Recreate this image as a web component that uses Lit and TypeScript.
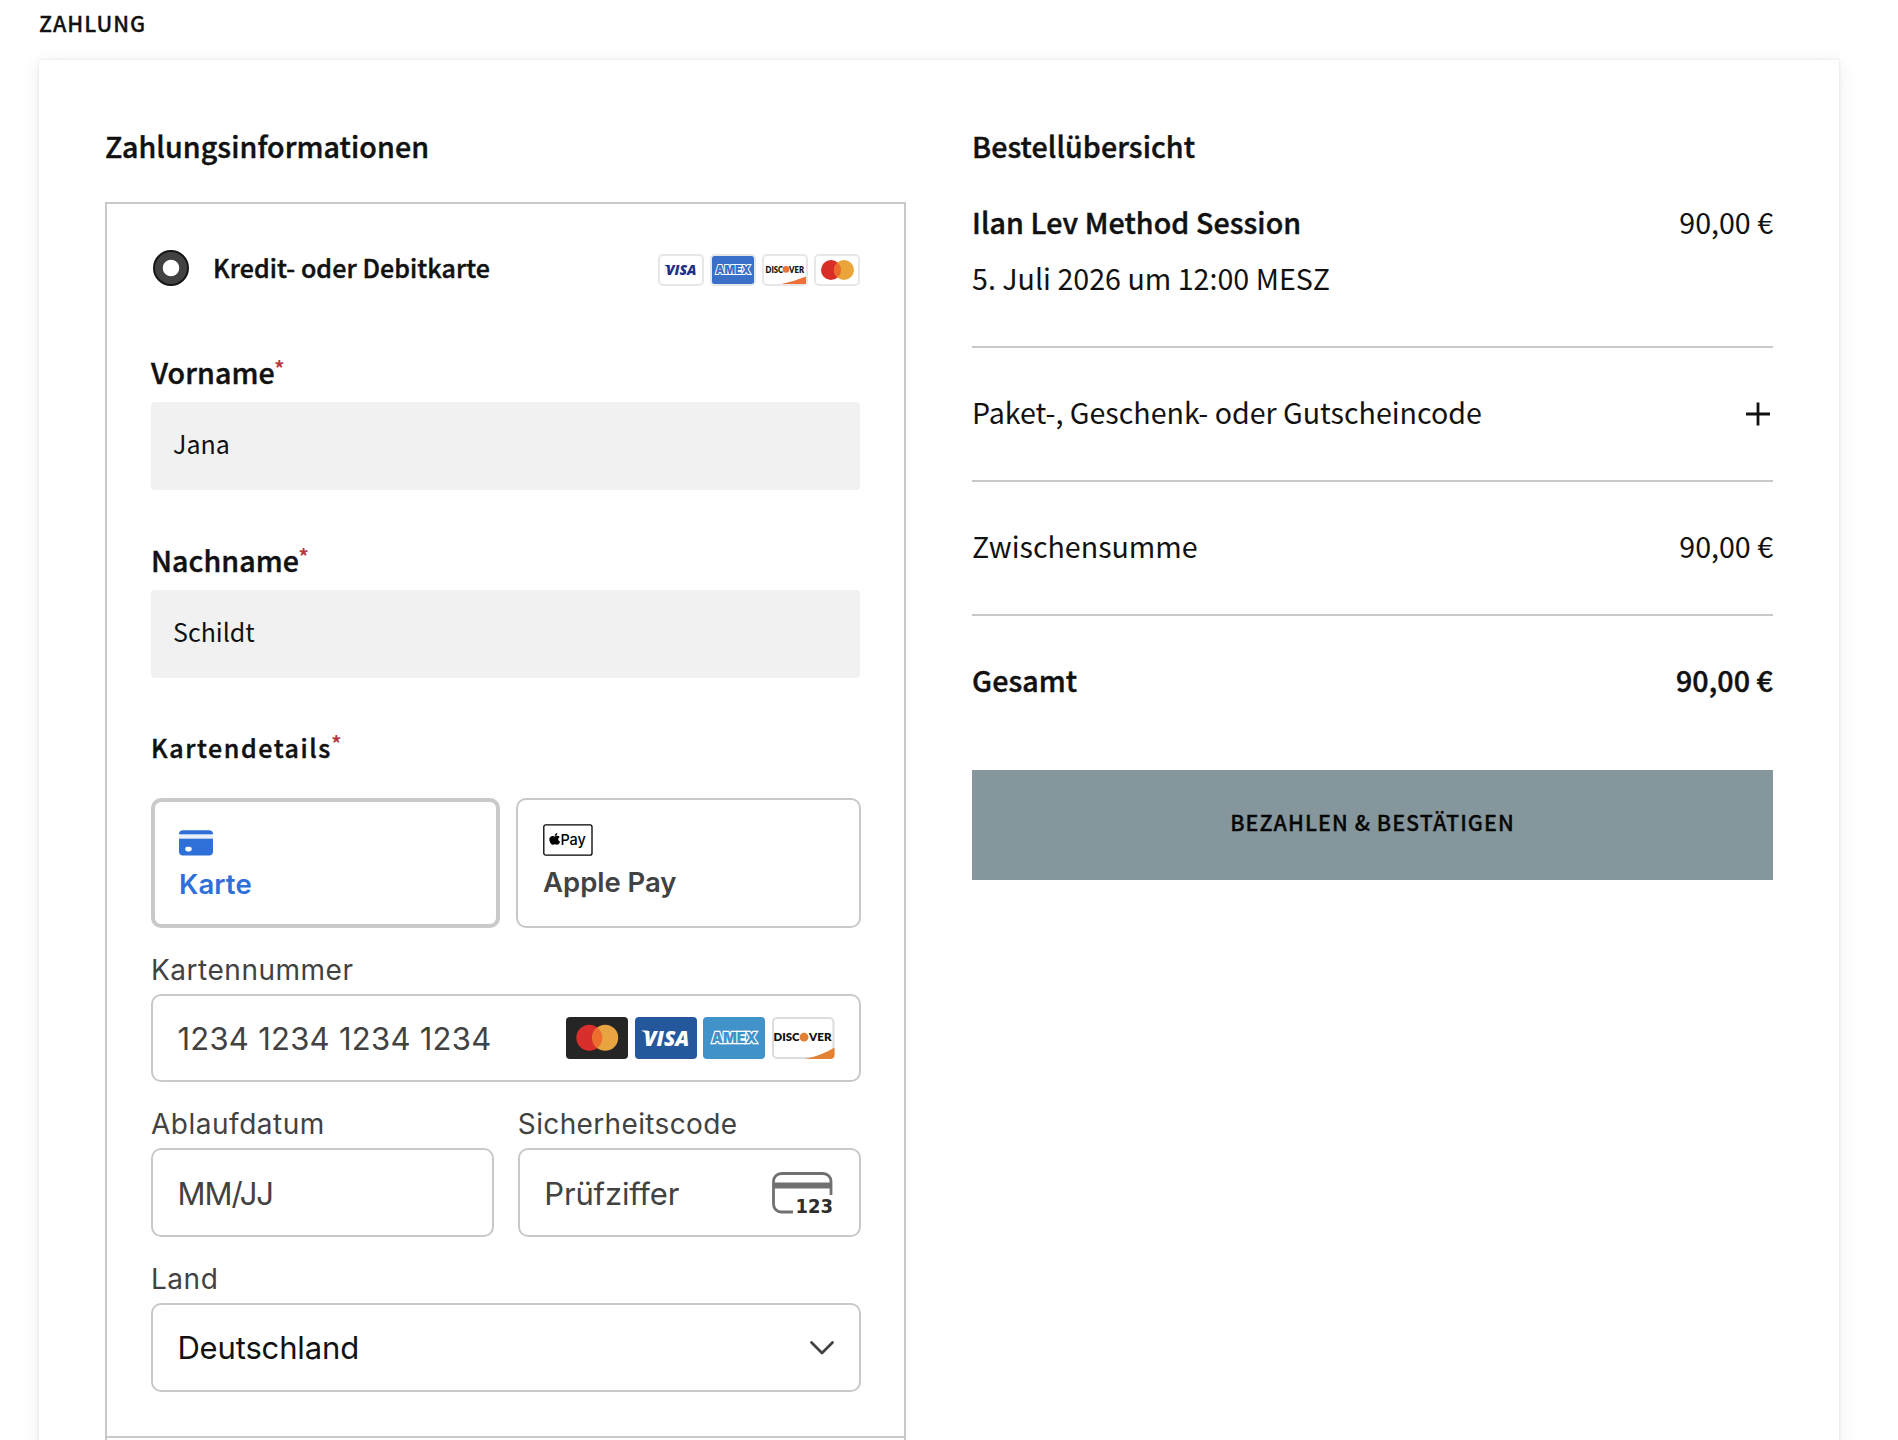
import { LitElement, html, css, svg } from 'lit';
import { customElement, property } from 'lit/decorators.js';

type Brand = 'visa' | 'amex' | 'discover' | 'mastercard';

@customElement('brand-badge')
class BrandBadge extends LitElement {
  @property() brand: Brand = 'visa';

  static styles = css`
    :host { display: block; width: 46px; height: 32px; }
    svg { display: block; }
    .frame { fill: #fff; stroke: #e7e7e7; stroke-width: 2; }
    .visa { font: italic 800 14.2px "Open Sans", sans-serif; fill: #1f2f86; }
    .amex { font: 900 11.8px Inter, sans-serif; fill: #3a70c8; stroke: #fff; stroke-width: 2; paint-order: stroke; }
    .discover { font: 800 9.2px Lato, sans-serif; fill: #111; }
  `;

  private art() {
    switch (this.brand) {
      case 'visa':
        return svg`<path d="M6.2 11.100H10.500L12 17Q10.200 12.600 6.200 11.100Z" fill="#1f2f86"/><text class="visa" x="8" y="21.2" textLength="30.500" lengthAdjust="spacingAndGlyphs">VISA</text>`;
      case 'amex':
        return svg`<rect x="2" y="2" width="42" height="28" rx="2.5" fill="#3a70c8"/>
          <text class="amex" x="5.600" y="20.400" textLength="35" lengthAdjust="spacingAndGlyphs">AMEX</text>`;
      case 'discover':
        return svg`<path d="M19.5 30 Q33 27 44 22.5 V30 Z" fill="#ed7139"/>
          <text class="discover" x="3.6" y="18.6" textLength="17.4" lengthAdjust="spacingAndGlyphs">DISC</text>
          <circle cx="24" cy="15.4" r="3.3" fill="#ed7139"/>
          <text class="discover" x="27" y="18.6" textLength="15" lengthAdjust="spacingAndGlyphs">VER</text>`;
      default:
        return svg`<circle cx="17" cy="16" r="10" fill="#d92e25"/><circle cx="30" cy="16" r="10" fill="#eba43a"/>
          <path d="M23.5 8.4 A10 10 0 0 1 23.5 23.6 A10 10 0 0 1 23.5 8.4Z" fill="#ec6a2b"/>`;
    }
  }

  render() {
    return html`<svg width="46" height="32" viewBox="0 0 46 32"><rect class="frame" x="1" y="1" width="44" height="30" rx="4"/>${this.art()}</svg>`;
  }
}

@customElement('brand-tile')
class BrandTile extends LitElement {
  @property() brand: Brand = 'visa';

  static styles = css`
    :host { display: block; width: 62px; height: 42px; }
    svg { display: block; overflow: visible; }
    .visa { font: italic 800 21px "Open Sans", sans-serif; fill: #fff; }
    .amex { font: 900 14.8px Inter, sans-serif; fill: #4292ca; stroke: #fff; stroke-width: 2.4; paint-order: stroke; }
    .discover { font: 800 11.3px Lato, sans-serif; fill: #111; }
  `;

  private art() {
    switch (this.brand) {
      case 'visa':
        return svg`<rect width="62" height="42" rx="4" fill="#25579d"/>
          <path d="M6 13.400H12.500L15 22.500Q11.500 15.500 6 13.400Z" fill="#fff"/>
          <text class="visa" x="8.800" y="28.600" textLength="45.500" lengthAdjust="spacingAndGlyphs">VISA</text>`;
      case 'amex':
        return svg`<rect width="62" height="42" rx="4" fill="#4292ca"/>
          <text class="amex" x="8.5" y="26.2" textLength="45.500" lengthAdjust="spacingAndGlyphs">AMEX</text>`;
      case 'discover':
        return svg`<rect x="1" y="1" width="60.5" height="40" rx="4" fill="#fff" stroke="#dcdcdc" stroke-width="2"/>
          <path d="M33 42 Q50 38.5 62.5 30.5 V38 Q62.5 42 58.5 42 Z" fill="#e28133"/>
          <text class="discover" x="1.6" y="24.3" textLength="26" lengthAdjust="spacingAndGlyphs">DISC</text>
          <circle cx="32" cy="20.2" r="4.4" fill="#e28133"/>
          <text class="discover" x="37" y="24.3" textLength="22.500" lengthAdjust="spacingAndGlyphs">VER</text>`;
      default:
        return svg`<rect width="62" height="42" rx="4" fill="#252525"/>
          <circle cx="23.3" cy="20.8" r="13" fill="#d82e2c"/><circle cx="39.2" cy="20.8" r="13" fill="#e9a442"/>
          <path d="M31.25 10.5 A13 13 0 0 1 31.25 31.1 A13 13 0 0 1 31.25 10.5Z" fill="#ec6d2e"/>`;
    }
  }

  render() {
    return html`<svg width="62" height="42" viewBox="0 0 62 42">${this.art()}</svg>`;
  }
}

const BADGES: Brand[] = ['visa', 'amex', 'discover', 'mastercard'];
const TILES: Brand[] = ['mastercard', 'visa', 'amex', 'discover'];
const NAMES = [
  { label: 'Vorname', value: 'Jana' },
  { label: 'Nachname', value: 'Schildt' },
];
const PRICE = '90,00 €';

@customElement('app-root')
class AppRoot extends LitElement {
  static styles = css`
    * { box-sizing: border-box; }
    :host {
      display: block; height: 1440px; overflow: hidden; background: #fff; color: #111;
      font: 400 28.6px/40px "Noto Sans CJK SC", "Noto Sans", sans-serif;
    }
    .title {
      height: 60px; margin: 0; padding-left: 39px;
      font-size: 21.5px; font-weight: 500; line-height: 46px; letter-spacing: 1px;
      -webkit-text-stroke: 0.3px currentColor;
    }
    .card {
      display: flex; gap: 66px; width: 1800px; height: 1500px; margin-left: 39px; padding: 66px 66px 0;
      background: #fff; box-shadow: 0 0 3px rgba(0, 0, 0, 0.1), 0 3px 18px rgba(0, 0, 0, 0.08);
    }
    .col { width: 801px; }
    .semi, h2 { font-weight: 500; letter-spacing: 0.09px; -webkit-text-stroke: 0.45px currentColor; }
    h2 { margin: 0; font-size: 28.6px; line-height: 40px; }
    .pay h2 { margin-bottom: 36px; }
    .panel { height: 1236px; padding: 44px 43.5px 0 44px; border: 2px solid #c9c9c9; }
    .rest { height: 60px; border: 2px solid #c9c9c9; border-top: 0; }
    .method { display: flex; height: 40px; align-items: center; }
    .radio {
      width: 36px; height: 36px; margin: 0 24px 0 2px; border: 2.5px solid #161616; border-radius: 50%;
      background: radial-gradient(circle, #fff 7.8px, #424242 8.6px);
    }
    .method .semi { flex: 1; height: 40px; font-size: 25px; line-height: 39px; letter-spacing: 0.08px; }
    .badges { display: flex; gap: 6px; padding-top: 4px; margin-right: 0.5px; }
    .name { margin-top: 50px; }
    .method + .name { margin-top: 64px; }
    .label { display: flex; }
    .star { margin-left: -0.6px; color: #b3373c; font-size: 20px; line-height: 31px; font-weight: 700; }
    .input { height: 88px; margin-top: 10px; margin-right: 0.5px; padding-left: 22px; border-radius: 4px; background: #f1f1f1; font-size: 25px; line-height: 82px; }
    .details { margin: 49px 0 31px; }
    .details .semi { font-size: 25px; letter-spacing: 1.58px; }
    .stripe { font-family: Inter, sans-serif; color: #424242; }
    .tabs { display: flex; gap: 16.5px; }
    .tab {
      flex: 1; height: 130px; padding: 24px 0 0 25px; border: 2px solid #c9c9c9; border-radius: 10px;
      font-size: 27.5px; line-height: 34px; font-weight: 600;
    }
    .tab.on { flex: 0 0 348.6px; padding: 28px 0 0 24px; border-width: 4px; color: #2f6fd8; }
    .tab svg { display: block; }
    .tab.on svg { margin-bottom: 11px; }
    .tab:not(.on) svg { margin-bottom: 9px; }
    .tab.on span { letter-spacing: 0.1px; }
    .tab span { letter-spacing: -0.06px; }
    .paymark { font: 500 14.8px Inter, sans-serif; fill: #000; }
    .cap { margin: 25px 0 7px; font-size: 28px; line-height: 34px; letter-spacing: 0.52px; }
    .code { letter-spacing: 0.36px; }
    .field {
      display: flex; align-items: center; justify-content: space-between; height: 88.4px;
      padding: 0 25px 0 24.4px; border: 2px solid #c9c9c9; border-radius: 10px; font-size: 31px; line-height: 84px;
    }
    .field > span { padding-top: 2px; line-height: 82px; letter-spacing: -0.15px; }
    .field > .number { letter-spacing: 0.27px; }
    .field > .month { letter-spacing: -1px; }
    .tiles { display: flex; gap: 6.6px; margin-right: -0.4px; }
    .split { display: flex; gap: 24.2px; }
    .split > div { flex: 1; }
    .country { color: #111; height: 89px; }
    .country svg { margin-right: -1.4px; margin-top: 2px; }
    .cvcicon { overflow: visible; }
    .cvc { font: 700 19.4px "DejaVu Sans", sans-serif; fill: #2e2e2e; }
    .row { display: flex; justify-content: space-between; }
    .order .item { margin-top: 36px; }
    .order .date { margin-top: 16px; letter-spacing: 0.02px; }
    .line { height: 2px; margin: 48px 0 44px; background: #c9c9c9; }
    .plus { margin: 10px 2px 0 0; width: 26px; height: 26px; }
    .confirm {
      display: block; width: 100%; height: 110px; margin-top: 70px; padding: 0 0 6px; border: 0; background: #85969c; color: #060606;
      font: 500 21.5px/104px "Noto Sans CJK SC", sans-serif; letter-spacing: 1.05px; -webkit-text-stroke: 0.3px currentColor;
    }
  `;

  private label(text: string) {
    return html`<div class="label"><span class="semi">${text}</span><span class="star">*</span></div>`;
  }

  private row(name: string, cls = '') {
    return html`<div class="row ${cls}"><span>${name}</span><span>${PRICE}</span></div>`;
  }

  private payment() {
    return html`
      <section class="col pay">
        <h2>Zahlungsinformationen</h2>
        <div class="panel">
          <div class="method">
            <div class="radio"></div>
            <div class="semi">Kredit- oder Debitkarte</div>
            <div class="badges">${BADGES.map((b) => html`<brand-badge .brand=${b}></brand-badge>`)}</div>
          </div>
          ${NAMES.map((n) => html`<div class="name">${this.label(n.label)}<div class="input">${n.value}</div></div>`)}
          <div class="details">${this.label('Kartendetails')}</div>
          ${this.cardForm()}
        </div>
        <div class="rest"></div>
      </section>`;
  }

  private cardForm() {
    return html`
      <div class="stripe">
        <div class="tabs">
          <div class="tab on">
            <svg width="34" height="26" viewBox="0 0 34 26">
              <rect y="0.300" width="34" height="25.200" rx="4" fill="#2f6fd8"/>
              <rect y="4.300" width="34" height="4.400" fill="#e9f0fc"/>
              <rect x="6.200" y="16.800" width="6.600" height="4.600" rx="2.300" fill="#fff"/>
            </svg>
            <span>Karte</span>
          </div>
          <div class="tab">
            <svg width="50" height="32" viewBox="0 0 50 32">
              <rect x="0.8" y="0.8" width="48.2" height="30.4" rx="2" fill="#fff" stroke="#000" stroke-width="1.3"/>
              <path transform="translate(6.2 8.2) scale(0.0285 0.0262)" d="M318.700 268.700c-.2-36.700 16.400-64.400 50-84.800-18.800-26.900-47.200-41.700-84.700-44.600-35.500-2.800-74.300 20.700-88.500 20.700-15 0-49.400-19.700-76.400-19.700C63.300 141.200 4 184.800 4 273.500q0 39.300 14.400 81.200c12.800 36.700 59 126.700 107.200 125.200 25.200-.6 43-17.900 75.800-17.900 31.800 0 48.300 17.900 76.400 17.900 48.600-.7 90.400-82.500 102.600-119.300-65.200-30.700-61.700-90-61.700-91.900zm-56.600-164.200c27.300-32.400 24.800-61.900 24-72.500-24.100 1.400-52 16.400-67.900 34.900-17.500 19.800-27.800 44.300-25.600 71.900 26.100 2 49.900-11.400 69.500-34.300z"/>
              <text class="paymark" x="17.400" y="20.700" textLength="25.500" lengthAdjust="spacingAndGlyphs">Pay</text>
            </svg>
            <span>Apple Pay</span>
          </div>
        </div>
        <div class="cap">Kartennummer</div>
        <div class="field">
          <span class="number">1234 1234 1234 1234</span>
          <div class="tiles">${TILES.map((b) => html`<brand-tile .brand=${b}></brand-tile>`)}</div>
        </div>
        <div class="split">
          <div><div class="cap">Ablaufdatum</div><div class="field"><span class="month">MM/JJ</span></div></div>
          <div>
            <div class="cap code">Sicherheitscode</div>
            <div class="field">
              <span>Prüfziffer</span>
              <svg class="cvcicon" width="62" height="42" viewBox="0 0 62 42">
                <path d="M21 40H9.500A8 8 0 0 1 1.500 32V9.500A8 8 0 0 1 9.500 1.500H51A8 8 0 0 1 59 9.500V23" fill="none" stroke="#707070" stroke-width="2.800"/>
                <rect x="1" y="10.500" width="59" height="6" fill="#707070"/>
                <text class="cvc" x="23.500" y="41" textLength="37.500" lengthAdjust="spacingAndGlyphs">123</text>
              </svg>
            </div>
          </div>
        </div>
        <div class="cap">Land</div>
        <div class="field country">
          <span>Deutschland</span>
          <svg width="26" height="16" viewBox="0 0 26 16"><path d="M2.500 2.600L13 13L23.500 2.600" fill="none" stroke="#424242" stroke-width="2.800" stroke-linecap="round" stroke-linejoin="round"/></svg>
        </div>
      </div>`;
  }

  private order() {
    return html`
      <section class="col order">
        <h2>Bestellübersicht</h2>
        <div class="row item"><span class="semi">Ilan Lev Method Session</span><span>${PRICE}</span></div>
        <div class="date">5. Juli 2026 um 12:00 MESZ</div>
        <div class="line"></div>
        <div class="row">
          <span>Paket-, Geschenk- oder Gutscheincode</span>
          <svg class="plus" viewBox="0 0 26 26"><path d="M1 12H25M13 0.500V23.500" stroke="#111" stroke-width="2.800"/></svg>
        </div>
        <div class="line"></div>
        ${this.row('Zwischensumme')}
        <div class="line"></div>
        ${this.row('Gesamt', 'semi')}
        <button class="confirm">BEZAHLEN &amp; BESTÄTIGEN</button>
      </section>`;
  }

  render() {
    return html`<h1 class="title">ZAHLUNG</h1><main class="card">${this.payment()}${this.order()}</main>`;
  }
}
